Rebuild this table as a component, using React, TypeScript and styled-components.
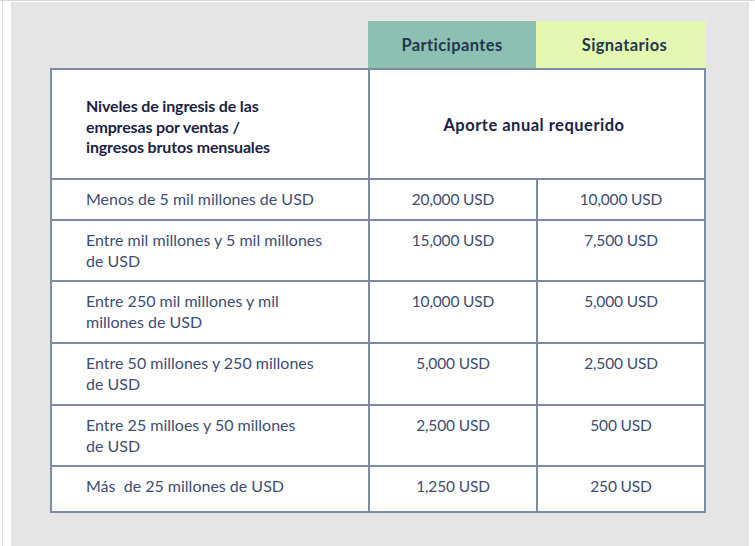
import React from "react";
import styled, { createGlobalStyle } from "styled-components";

const Global = createGlobalStyle`
  html, body { margin: 0; padding: 0; background: #ffffff; }
  body { font-family: Lato, "Noto Sans", sans-serif; }
`;

const Frame = styled.div`
  width: 755px;
  height: 546px;
  box-sizing: border-box;
  background: #ffffff;
  border-top: 1px solid #d6d6d6;
  padding: 1px 6px 0 11px;
  position: relative;
  display: flex;
  &::before {
    content: "";
    position: absolute;
    left: 2px;
    top: 0;
    bottom: 0;
    width: 1px;
    background: #e2e2e2;
  }
`;

const Panel = styled.div`
  flex: 1;
  background: #e5e5e5;
  padding: 19px 0 0 39px;
  display: flex;
  flex-direction: column;
`;

const TabRow = styled.div`
  display: flex;
  padding-left: 318px;
  height: 47px;
`;

const Tab = styled.div<{ $bg: string; $w: number; $shift?: number }>`
  width: ${(p) => p.$w}px;
  box-sizing: border-box;
  padding-left: ${(p) => p.$shift ?? 0}px;
  background: ${(p) => p.$bg};
  display: flex;
  align-items: center;
  justify-content: center;
  font-weight: 700;
  font-size: 16.5px;
  color: #22374f;
  letter-spacing: 0.4px;
`;

const Grid = styled.div`
  width: 656px;
  box-sizing: border-box;
  display: grid;
  grid-template-columns: 316px 166px 166px;
  grid-template-rows: 108px 39px 59px 60px 60px 59px 44px;
  gap: 2px;
  padding: 2px;
  background: #7e8ba5;
`;

const Cell = styled.div<{ $align?: "left" | "center" }>`
  background: #ffffff;
  box-sizing: border-box;
  padding: ${(p) => (p.$align === "center" ? "9px 4px 0" : "9px 20px 0 34px")};
  text-align: ${(p) => p.$align ?? "left"};
  font-size: ${(p) => (p.$align === "center" ? "15.5px" : "16px")};
  line-height: 20.5px;
  color: #3e4d73;
  letter-spacing: ${(p) => (p.$align === "center" ? "-0.15px" : "0px")};
  white-space: nowrap;
`;

const HeadCell = styled.div`
  background: #ffffff;
  padding: 26px 20px 0 34px;
  font-weight: 700;
  font-size: 16px;
  line-height: 20.7px;
  color: #201f44;
  letter-spacing: -0.15px;
`;

const SpanHead = styled.div`
  grid-column: 2 / 4;
  background: #ffffff;
  display: flex;
  align-items: center;
  justify-content: center;
  font-weight: 700;
  font-size: 16.5px;
  color: #201f44;
  letter-spacing: 0.5px;
  padding: 1px 6px 0 0;
`;

const rows: [string[], string, string][] = [
  [["Menos de 5 mil millones de USD"], "20,000 USD", "10,000 USD"],
  [["Entre mil millones y 5 mil millones", "de USD"], "15,000 USD", "7,500 USD"],
  [["Entre 250 mil millones y mil", "millones de USD"], "10,000 USD", "5,000 USD"],
  [["Entre 50 millones y 250 millones", "de USD"], "5,000 USD", "2,500 USD"],
  [["Entre 25 milloes y 50 millones", "de USD"], "2,500 USD", "500 USD"],
  [["Más\u00a0 de 25 millones de USD"], "1,250 USD", "250 USD"],
];

const Line = styled.span`
  display: block;
`;

export default function App() {
  return (
    <>
      <Global />
      <Frame>
        <Panel>
          <TabRow>
            <Tab $bg="#8dc0b3" $w={168}>Participantes</Tab>
            <Tab $bg="#e5f8b2" $w={170} $shift={7}>Signatarios</Tab>
          </TabRow>
          <Grid>
            <HeadCell>
              Niveles de ingresis de las
              <br />
              empresas por ventas /
              <br />
              ingresos brutos mensuales
            </HeadCell>
            <SpanHead>Aporte anual requerido</SpanHead>
            {rows.map(([label, a, b]) => (
              <React.Fragment key={label[0]}>
                <Cell>
                  {label.map((l) => (
                    <Line key={l}>{l}</Line>
                  ))}
                </Cell>
                <Cell $align="center">{a}</Cell>
                <Cell $align="center">{b}</Cell>
              </React.Fragment>
            ))}
          </Grid>
        </Panel>
      </Frame>
    </>
  );
}
